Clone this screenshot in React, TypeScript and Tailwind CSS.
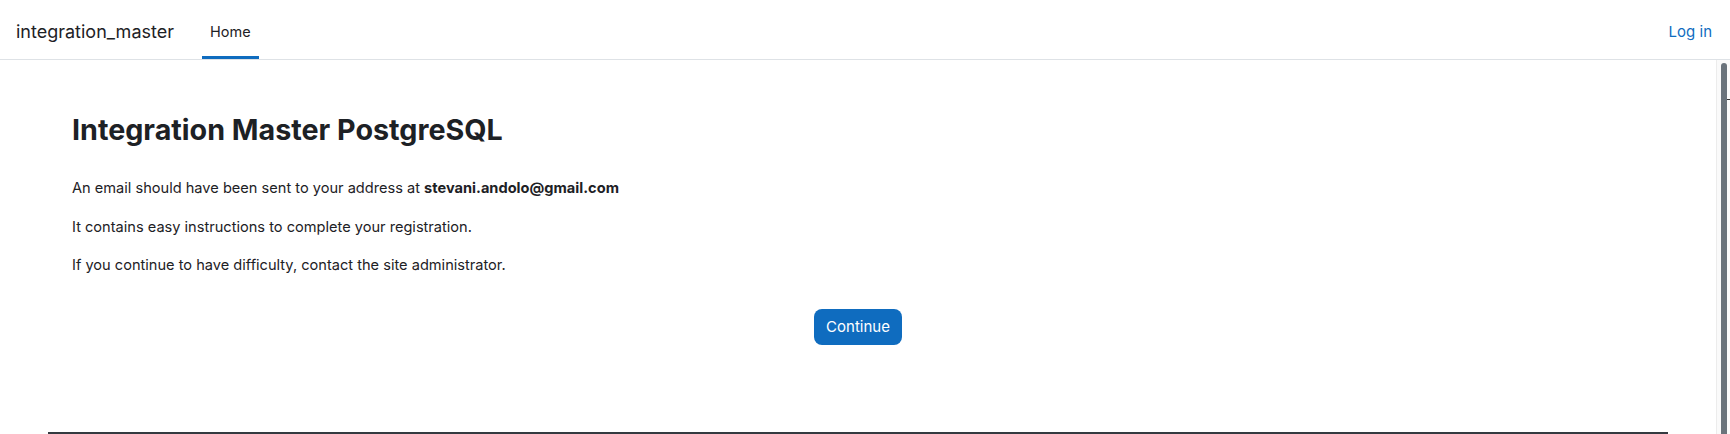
import React from 'react';

const NavBar: React.FC = () => (
  <nav className="h-[60px] shrink-0 border-b border-[#dee2e6] flex items-stretch pl-4 pr-4 bg-white">
    <a className="flex items-center text-[18px] text-[#1d2125] mr-7 pt-[4px]">integration_master</a>
    <a className="flex items-center px-[8px] text-[14.5px] text-[#1d2125] border-b-[3px] border-[#0f6cbf] pt-[8px]">
      Home
    </a>
    <div className="flex-1" />
    <a className="flex items-center text-[15px] text-[#0f6cbf] pr-[2px] pt-[5px]">Log in</a>
  </nav>
);

const App: React.FC = () => {
  return (
    <div className="h-[434px] overflow-hidden flex flex-col bg-white font-['Inter','Liberation_Sans',sans-serif] text-[#1d2125]">
      <NavBar />
      <div className="flex flex-1 min-h-0">
        <main className="flex-1 flex flex-col px-12">
          <div className="px-6 pt-[53px]">
            <h2 className="text-[28.7px] leading-[1.2] font-bold mb-[30px]">Integration Master PostgreSQL</h2>
            <p className="text-[14.6px] leading-[22.5px] mb-4">
              An email should have been sent to your address at <b className="font-bold">stevani.andolo@gmail.com</b>
            </p>
            <p className="text-[14.6px] leading-[22.5px] mb-4">It contains easy instructions to complete your registration.</p>
            <p className="text-[14.6px] leading-[22.5px] mb-4">If you continue to have difficulty, contact the site administrator.</p>
            <div className="flex justify-center mt-[32px]">
              <button className="h-9 px-3 rounded-lg bg-[#0f6cbf] text-white text-[15px]">Continue</button>
            </div>
          </div>
          <div className="mt-auto h-[2px] bg-[#343a40]" />
        </main>
        <div className="w-[14px] bg-[#fafafa] border-l border-[#ececec] flex justify-center pt-[3px] relative">
          <div className="w-[6px] h-full rounded-t-full bg-[#6a737b]" />
          <div className="absolute right-0 top-[39px] w-[3px] h-[1px] bg-[#333]" />
        </div>
      </div>
    </div>
  );
};

export default App;
